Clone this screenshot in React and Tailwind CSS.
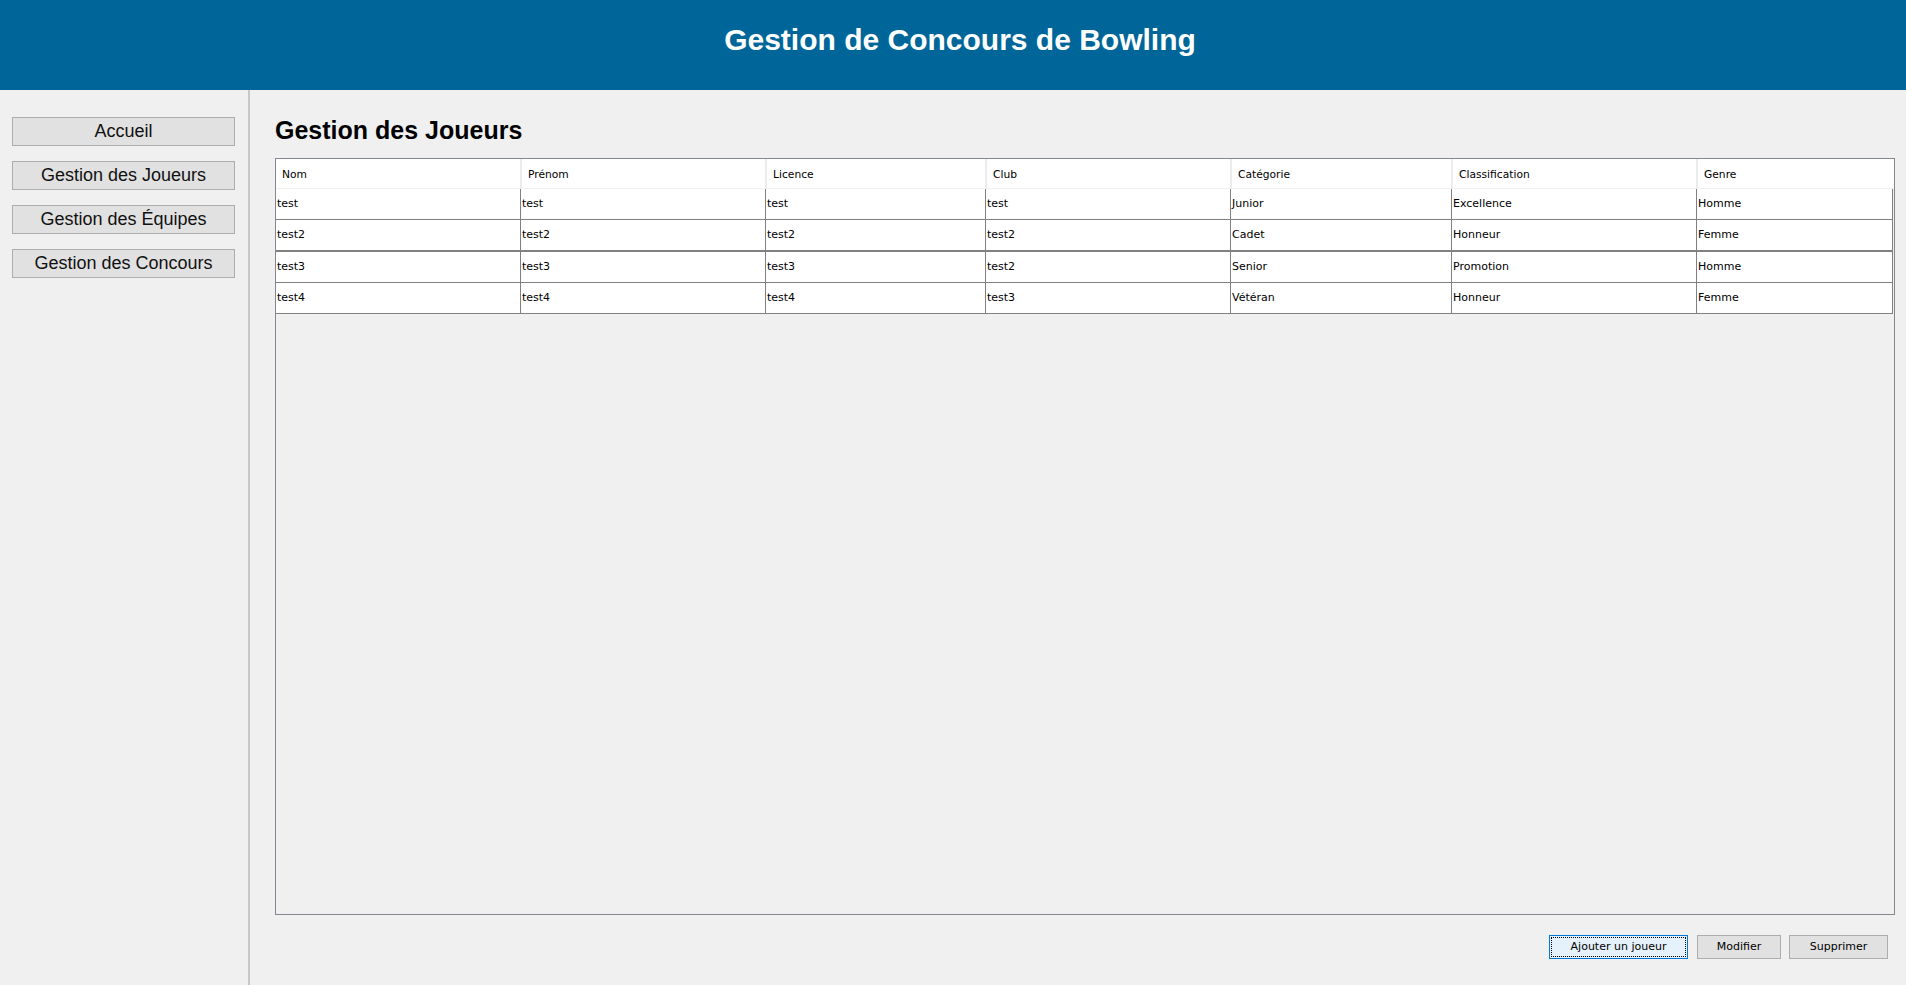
import React from "react";

const columns = [
  { label: "Nom", w: "w-[244px]" },
  { label: "Prénom", w: "w-[245px]" },
  { label: "Licence", w: "w-[220px]" },
  { label: "Club", w: "w-[245px]" },
  { label: "Catégorie", w: "w-[221px]" },
  { label: "Classification", w: "w-[245px]" },
  { label: "Genre", w: "w-[197px]" },
];

const rows = [
  ["test", "test", "test", "test", "Junior", "Excellence", "Homme"],
  ["test2", "test2", "test2", "test2", "Cadet", "Honneur", "Femme"],
  ["test3", "test3", "test3", "test2", "Senior", "Promotion", "Homme"],
  ["test4", "test4", "test4", "test3", "Vétéran", "Honneur", "Femme"],
];

const navItems = ["Accueil", "Gestion des Joueurs", "Gestion des Équipes", "Gestion des Concours"];

export default function App() {
  return (
    <div className="h-[985px] w-[1906px] flex flex-col bg-[#f0f0f0] overflow-hidden">
      <header className="h-[90px] shrink-0 bg-[#006699] flex justify-center pt-[25px] pl-[14px]">
        <h1 className="text-white font-bold text-[30px] leading-[30px] font-['Liberation_Sans',Arial,sans-serif]">
          Gestion de Concours de Bowling
        </h1>
      </header>
      <div className="flex flex-1 min-h-0">
        <aside className="w-[250px] shrink-0 border-r-2 border-[#c8c8c8] pt-[27px] pl-[12px] flex flex-col gap-[15px]">
          {navItems.map((n) => (
            <button
              key={n}
              className="w-[223px] h-[29px] bg-[#e1e1e1] border border-[#adadad] text-[18px] leading-none text-[#111] font-['Liberation_Sans',Arial,sans-serif] pb-[1px]"
            >
              {n}
            </button>
          ))}
        </aside>
        <main className="flex-1 flex flex-col pl-[25px] pr-[11px] pt-[28px] pb-[26px] min-w-0">
          <h2 className="text-[25px] leading-[25px] font-bold text-black font-['Liberation_Sans',Arial,sans-serif]">
            Gestion des Joueurs
          </h2>
          <div className="mt-[15px] flex-1 border border-[#828790] font-['DejaVu_Sans',Tahoma,sans-serif] text-black">
            <div className="flex h-[30px] bg-white border-b border-[#f0f0f0]">
              {columns.map((c, i) => (
                <div
                  key={c.label}
                  className={`${c.w} shrink-0 flex items-center pl-[6px] pt-[3px] text-[10.7px] ${i > 0 ? "border-l-2 border-[#ececec]" : ""}`}
                >
                  {c.label}
                </div>
              ))}
            </div>
            {rows.map((r, ri) => (
              <div key={ri} className={`flex bg-white ${ri === 1 ? "h-[32px] border-b-2" : "h-[31px] border-b"} border-[#808080] w-[1617px]`}>
                {r.map((cell, ci) => (
                  <div
                    key={ci}
                    className={`${columns[ci].w} shrink-0 flex items-center pl-[1px] pt-[1px] text-[11px] ${ci > 0 ? "border-l border-[#808080]" : ""} ${ci === 6 ? "border-r border-[#808080]" : ""}`}
                  >
                    {cell}
                  </div>
                ))}
              </div>
            ))}
          </div>
          <div className="mt-[20px] flex justify-end gap-[8px] pr-[7px] font-['DejaVu_Sans',Tahoma,sans-serif] text-[11px] text-black">
            <button className="relative w-[139px] h-[24px] bg-[#e5f1fb] border border-[#0078d7] mr-[1px] pt-[1px]">
              <span className="absolute inset-[1px] border border-dotted border-black"></span>
              Ajouter un joueur
            </button>
            <button className="w-[84px] h-[24px] bg-[#e1e1e1] border border-[#adadad] pt-[1px]">Modifier</button>
            <button className="w-[99px] h-[24px] bg-[#e1e1e1] border border-[#adadad] pt-[1px]">Supprimer</button>
          </div>
        </main>
      </div>
    </div>
  );
}
